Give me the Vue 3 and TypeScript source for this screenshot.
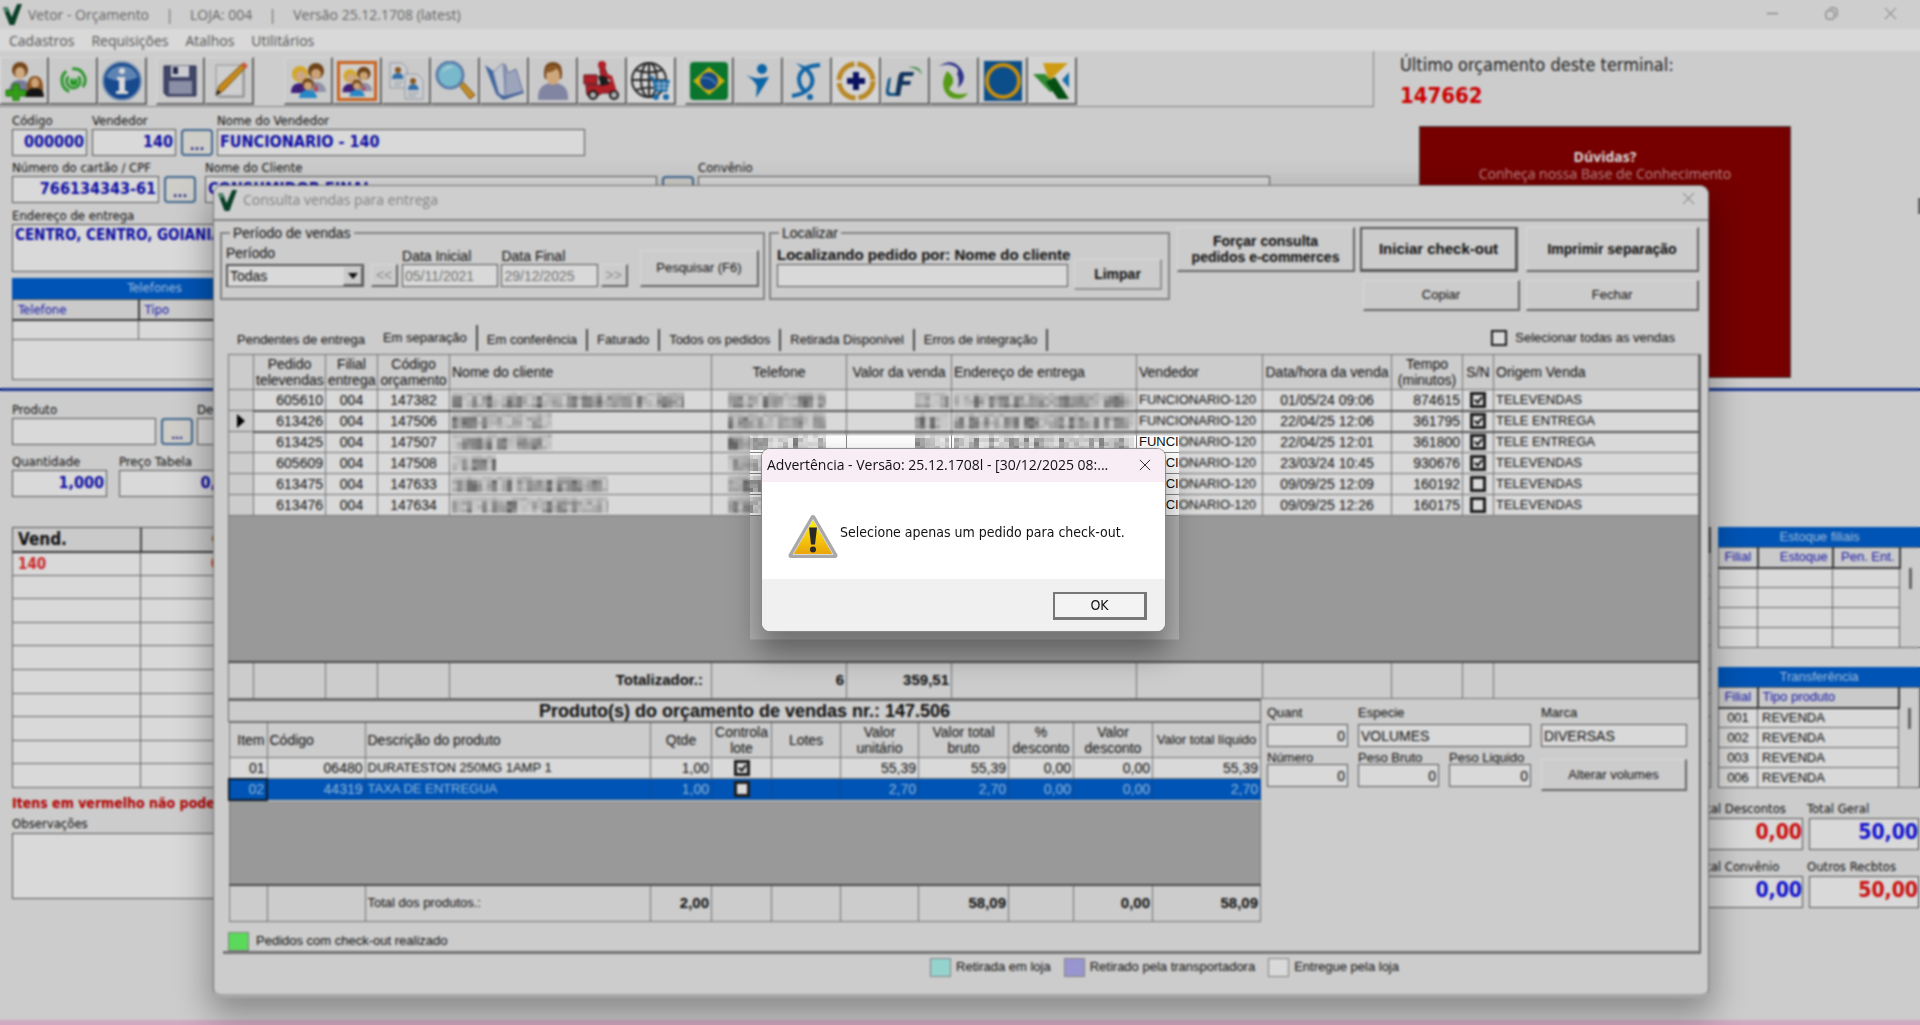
<script setup lang="ts">
import { ref } from 'vue'

type Sale = { order: string; branch: string; quote: string; name: number; date: string; minutes: string; checked: boolean; origin: string }
type Product = { item: string; code: string; description: string; lot: boolean; unit: string; selected: boolean }
type Block = { x: number; y: number; shade: string }

const menus = ['Cadastros', 'Requisições', 'Atalhos', 'Utilitários']

const people = `
  <circle cx="12" cy="13" r="8" fill="#f7c52f"/><circle cx="13" cy="15" r="5" fill="#f0c39a"/>
  <path d="M3 32q0-10 9-10t9 10z" fill="#4b2590"/>
  <circle cx="28" cy="10" r="8" fill="#82501f"/><circle cx="28" cy="13" r="5" fill="#f0c08c"/>
  <path d="M19 31q0-10 9-10t10 10z" fill="#a9abc6"/><path d="M28 22l2 7-2 2-2-2z" fill="#d8455c"/>
  <circle cx="20" cy="23" r="6" fill="#8a5522"/><circle cx="20" cy="25" r="4" fill="#f0c08c"/>
  <path d="M11 37q1-8 9-8t9 8z" fill="#2f9fe8"/>`

const icons: Record<string, string> = {
  addPeople: `<circle cx="16" cy="9" r="8" fill="#8a5420"/><ellipse cx="16" cy="12" rx="5" ry="6" fill="#f2c799"/>
    <path d="M5 32q0-13 11-13t10 13z" fill="#8c90b4"/><path d="M23 31q-1-16 8-16t8 16z" fill="#a5652a"/>
    <ellipse cx="31" cy="22" rx="4" ry="5" fill="#f0c08c"/><path d="M21 36q1-9 10-9t9 9z" fill="#191919"/>
    <path d="M9 23h6v6h7v6h-7v6H9v-6H2v-6h7z" fill="#3dba1c" stroke="#207c0b"/>`,
  power: `<g fill="none" stroke="#35b135" stroke-width="4"><path d="M11 7a16 16 0 0 0 4 27"/><path d="M19 4a15 15 0 0 1 14 24"/><path d="M14 14a9 9 0 1 0 13 0"/></g>
    <circle cx="21" cy="21" r="5" fill="#22b022"/><path d="M21 12v8" stroke="#d7f5d7" stroke-width="2"/>`,
  info: `<circle cx="20" cy="20" r="19" fill="#1c57a8" stroke="#95afd0" stroke-width="2"/><path d="M4 16a17 17 0 0 1 32 0q-16 8-32 0z" fill="#6f9bd2"/>
    <circle cx="20" cy="10" r="3" fill="#fff"/><path d="M15 16h8v14h3v3H14v-3h3V19h-2z" fill="#fff"/>`,
  save: `<path d="M4 5h32v30H7l-3-3z" fill="#4d547c" stroke="#2e3358"/><path d="M11 5h18v11H11z" fill="#eef0f7"/><path d="M13 6h5v7h-5z" fill="#2e3358"/>
    <path d="M9 20h23v13H9z" fill="#a3a8c4"/>`,
  edit: `<path d="M7 4h27v31H7z" fill="#f2f2f2" stroke="#aaa"/><path d="M9 36h26V8" fill="none" stroke="#8c8c8c"/>
    <path d="M7 34l3-9L33 3l4 3-23 24z" fill="#eaa320" stroke="#87580f"/><path d="M32 4l3-3 4 4-3 3z" fill="#e8674a"/><path d="M7 34l2-5 3 3z" fill="#222"/>`,
  people,
  peopleFrame: `<path d="M1 1h38v38H1z" fill="#f6f2ee" stroke="#ee7423" stroke-width="4"/><g transform="translate(3 4) scale(.85)">${people}</g>`,
  docs: `<path d="M4 2h12l5 5v20H4z" fill="#f0f2f6" stroke="#a9b0bc"/><circle cx="12" cy="9" r="3" fill="#a06526"/><path d="M6 18q0-6 6-6t5 6z" fill="#3d82c4"/>
    <path d="M8 21h9M8 24h7" stroke="#a5acb8"/><path d="M19 13h12l6 6v19H19z" fill="#f0f2f6" stroke="#a9b0bc"/><circle cx="27" cy="20" r="3" fill="#a06526"/>
    <path d="M22 29q0-6 5-6t6 6z" fill="#3d82c4"/><path d="M22 32h11M22 35h8" stroke="#a5acb8"/>`,
  search: `<path d="M24 24l4-3 12 13-5 4z" fill="#e6a52f" stroke="#8b5e13"/><circle cx="15" cy="14" r="13" fill="#8edaf0" stroke="#6c93c9" stroke-width="3"/><path d="M7 12a9 9 0 0 1 12-6q-9 1-12 6z" fill="#eafbff"/>`,
  book: `<path d="M1 4l8 6 10 26-7-3z" fill="#4a78ba"/><path d="M9 11L19 2l3 34-7-2z" fill="#e2e7f4" stroke="#8795bb"/><path d="M21 3l3 9 8-4 7 23-18 7z" fill="#b9c2de" stroke="#6f82b5"/><path d="M12 33l7 6 21-7-1-2-19 5-6-3z" fill="#5377b3"/>`,
  user: `<path d="M5 39q-1-17 15-17t15 17z" fill="#989dbf"/><path d="M11 12Q11 1 20 1t9 11q0 4-1 6H12q-1-2-1-6" fill="#885120"/><ellipse cx="20" cy="15" rx="7" ry="9" fill="#f3c491"/><path d="M13 11q7 1 11-4l3 5q1-8-7-8t-7 7z" fill="#a5692f"/>`,
  moto: `<g fill="#cf2630" stroke="#611016"><path d="M2 14h13v9H2z"/><path d="M18 7l4-2 3 8 3 3v2l-9-1z"/><path d="M4 24h15l3-3h7l5 8-6 3H20l-3 2H5z"/></g><circle cx="20" cy="4" r="4" fill="#cf2630"/>
    <path d="M16 15h8l3 8-8 2z" fill="#1f1f1f"/><g fill="#ccc" stroke="#191919" stroke-width="2"><circle cx="11" cy="34" r="4"/><circle cx="32" cy="34" r="4"/></g><path d="M24 14l5 2 4 14" fill="none" stroke="#cf2630" stroke-width="3"/>`,
  globe: `<g fill="none" stroke="#2b2b2b" stroke-width="2"><circle cx="18" cy="19" r="17"/><ellipse cx="18" cy="19" rx="8" ry="17"/><path d="M18 2v34M1 19h34M5 9q13 5 26 0M5 29q13-5 26 0"/></g>
    <path d="M17 15h5l2 4h15l-3 12H24l-3-13z" fill="#1c7cc4"/><path d="M24 23h14M25 27h12M28 20v10M33 20v10" stroke="#dcecf8"/><circle cx="25" cy="36" r="3" fill="#1c7cc4"/><circle cx="35" cy="36" r="3" fill="#1c7cc4"/>`,
  brazil: `<rect x="1" y="1" width="38" height="38" rx="4" fill="#0b8a35"/><path d="M20 6l16 14-16 14L4 20z" fill="#f3cf13"/><circle cx="20" cy="20" r="9" fill="#1954a0"/><path d="M12 17q9-2 15 6" fill="none" stroke="#5494d4" stroke-width="2"/>`,
  runner: `<circle cx="24" cy="8" r="5" fill="#0f77c4"/><path d="M8 14q10 4 14 3l9-1-4 7-9 14 1-12Q15 18 8 14z" fill="#0f77c4"/>`,
  loop: `<g fill="none" stroke="#1577c4" stroke-width="4"><path d="M33 4Q14 5 12 17q0 9 6 13"/><path d="M17 6q12 10 7 19-5 8-19 10"/></g><path d="M9 2l13 5-4 3z" fill="#1577c4"/><circle cx="23" cy="36" r="3" fill="#1577c4"/>`,
  cross: `<circle cx="20" cy="20" r="17" fill="none" stroke="#dba12f" stroke-width="5" stroke-dasharray="24 3"/><path d="M17 11h6v6h6v6h-6v6h-6v-6h-6v-6h6z" fill="#0d1672"/>`,
  letters: `<path d="M3 18l3-2-2 14q0 2 4 2h7l-2 3H5q-5 0-4-6z" fill="#16649c"/><path d="M17 11h12l-1 4h-9l-1 5h8l-1 4h-8l-2 11h-5l3-18q1-6 4-6z" fill="#173e6e"/><path d="M23 6q13-2 14 8l-3-4q-4-3-11-4z" fill="#44a34d"/>`,
  swirl: `<path d="M5 5Q19-4 27 8q7 10-3 19 2-10-1-14 2-4 0-6Q16 1 5 5z" fill="#373ba3"/><path d="M13 10q7 5 6 12l-4 6q6 8 19 4-5 8-16 5Q9 33 9 21q1-6 4-11z" fill="#66b51b"/>`,
  ring: `<path d="M1 0h38v40H1z" fill="#0e5ca2"/><circle cx="20" cy="20" r="16" fill="none" stroke="#e8a613" stroke-width="4"/>`,
  kite: `<path d="M11 2h25L17 20z" fill="#f3b718"/><path d="M1 13h12l14 15-9 3z" fill="#39a23b"/><path d="M14 21l9-5 14 22H26z" fill="#075d18"/><path d="M30 19l7-8v16z" fill="#1d83c9"/>`,
}

const toolGroups = [
  ['addPeople', 'power', 'info'],
  ['save', 'edit'],
  ['people', 'peopleFrame', 'docs', 'search', 'book', 'user', 'moto', 'globe'],
  ['brazil', 'runner', 'loop', 'cross', 'letters', 'swirl', 'ring', 'kite'],
]

const tabs = ['Pendentes de entrega', 'Em separação', 'Em conferência', 'Faturado', 'Todos os pedidos', 'Retirada Disponível', 'Erros de integração']

const sales = ref<Sale[]>([
  { order: '605610', branch: '004', quote: '147382', name: 232, date: '01/05/24 09:06', minutes: '874615', checked: true, origin: 'TELEVENDAS' },
  { order: '613426', branch: '004', quote: '147506', name: 100, date: '22/04/25 12:06', minutes: '361795', checked: true, origin: 'TELE ENTREGA' },
  { order: '613425', branch: '004', quote: '147507', name: 100, date: '22/04/25 12:01', minutes: '361800', checked: true, origin: 'TELE ENTREGA' },
  { order: '605609', branch: '004', quote: '147508', name: 44, date: '23/03/24 10:45', minutes: '930676', checked: true, origin: 'TELEVENDAS' },
  { order: '613475', branch: '004', quote: '147633', name: 156, date: '09/09/25 12:09', minutes: '160192', checked: false, origin: 'TELEVENDAS' },
  { order: '613476', branch: '004', quote: '147634', name: 156, date: '09/09/25 12:26', minutes: '160175', checked: false, origin: 'TELEVENDAS' },
])

const products = ref<Product[]>([
  { item: '01', code: '06480', description: 'DURATESTON 250MG 1AMP 1', lot: true, unit: '55,39', selected: false },
  { item: '02', code: '44319', description: 'TAXA DE ENTREGUA', lot: false, unit: '2,70', selected: true },
])

const selectAll = ref(false)
const transfers = ['001', '002', '003', '006']

// Masked personal data: a deterministic mosaic of small grey blocks.
function mosaic(width: number, seed: number): Block[] {
  const blocks: Block[] = []
  let state = seed * 7919 + 13
  const next = () => (state = (state * 48271) % 2147483647)
  for (let x = 0; x < width; x += 5) {
    const stroke = 115 + (next() % 105)
    for (let y = 0; y < 16; y += 4) {
      const level = y === 0 ? 205 + (next() % 30) : Math.min(235, stroke + (next() % 45))
      blocks.push({ x, y, shade: `rgb(${level},${level},${level})` })
    }
  }
  return blocks
}
</script>

<template>
  <main class="desktop">
    <header class="titlebar">
      <svg class="mark" viewBox="0 0 20 22" aria-hidden="true"><path d="M0 4l5-1 4 11L15 0h5l-8 22H7z" fill="#0b4a2e" /><path d="M0 4l5-1 1 4-4 2z" fill="#5c9c7c" /></svg>
      <span>Vetor - Orçamento</span><span class="bar">|</span><span>LOJA: 004</span><span class="bar">|</span><span>Versão 25.12.1708 (latest)</span>
      <div class="caption-buttons">
        <button type="button" aria-label="Minimizar"><svg viewBox="0 0 14 14"><path d="M1 7h12" /></svg></button>
        <button type="button" aria-label="Restaurar"><svg viewBox="0 0 14 14"><rect x="1" y="4" width="9" height="9" rx="2" /><path d="M4 2q1-1 2-1h4q3 0 3 3v5q0 1-1 2" /></svg></button>
        <button type="button" aria-label="Fechar aplicativo"><svg viewBox="0 0 14 14"><path d="M1 1l12 12M13 1L1 13" /></svg></button>
      </div>
    </header>
    <nav class="menubar"><a v-for="m in menus" :key="m" href="#">{{ m }}</a></nav>

    <section class="upper">
      <div class="upper-main">
        <div class="toolbar">
          <div v-for="(group, g) in toolGroups" :key="g" class="tool-group">
            <button v-for="name in group" :key="name" type="button" class="tool" :class="'tool-' + name" :aria-label="name">
              <svg viewBox="0 0 40 40" v-html="icons[name]"></svg>
            </button>
          </div>
        </div>
        <div class="form">
          <div class="row first-row">
            <label class="field w75 right">Código<input value="000000" /></label>
            <label class="field w84 right">Vendedor<input value="140" /></label>
            <button type="button" class="dots">...</button>
            <label class="field w368">Nome do Vendedor<input value="FUNCIONARIO - 140" /></label>
          </div>
          <div class="row">
            <label class="field w147 right">Número do cartão / CPF<input value="766134343-61" /></label>
            <button type="button" class="dots">...</button>
            <label class="field w452 client">Nome do Cliente<input value="CONSUMIDOR FINAL" /></label>
            <button type="button" class="dots">...</button>
            <label class="field w572">Convênio<input value="" /></label>
          </div>
          <label class="field address">Endereço de entrega<textarea rows="2">CENTRO, CENTRO, GOIANIA</textarea></label>
          <table class="phones">
            <caption>Telefones</caption>
            <thead><tr><th>Telefone</th><th>Tipo</th></tr></thead>
            <tbody><tr><td></td><td></td></tr><tr class="blank"><td colspan="2"></td></tr></tbody>
          </table>
        </div>
      </div>
      <aside class="side">
        <p class="last">Último orçamento deste terminal:</p>
        <p class="last-number">147662</p>
        <div class="help"><strong>Dúvidas?</strong><span>Conheça nossa Base de Conhecimento</span></div>
        <i class="thumb side-thumb"></i>
      </aside>
    </section>

    <section class="lower">
      <div class="lower-main">
        <div class="row product-row">
          <label class="field w144">Produto<input value="" /></label>
          <button type="button" class="dots">...</button>
          <label class="field w452">Descrição<input value="" /></label>
        </div>
        <div class="row amount-row">
          <label class="field w95 right">Quantidade<input value="1,000" /></label>
          <label class="field w130 right">Preço Tabela<input value="0,000" /></label>
        </div>
        <table class="items">
          <thead><tr><th class="seller">Vend.</th><th class="code">Código</th></tr></thead>
          <tbody>
            <tr><td>140</td><td class="code">06480</td></tr>
            <tr v-for="n in 9" :key="n"><td>&nbsp;</td><td>&nbsp;</td></tr>
          </tbody>
        </table>
      </div>
      <aside class="stock">
        <table class="mini">
          <caption>Estoque filiais</caption>
          <thead><tr><th class="c1">Filial</th><th class="c2 end">Estoque</th><th class="c3 end">Pen. Ent.</th><td class="scroll"></td></tr></thead>
          <tbody><tr v-for="n in 4" :key="n"><td></td><td></td><td></td><td v-if="n === 1" rowspan="4" class="scroll"><i class="thumb"></i></td></tr></tbody>
        </table>
        <table class="mini">
          <caption>Transferência</caption>
          <thead><tr><th class="c1">Filial</th><th>Tipo produto</th><td class="scroll"></td></tr></thead>
          <tbody><tr v-for="(t, i) in transfers" :key="t"><td class="mid">{{ t }}</td><td>REVENDA</td><td v-if="i === 0" rowspan="4" class="scroll"><i class="thumb"></i></td></tr></tbody>
        </table>
      </aside>
    </section>

    <section class="bottom">
      <div class="notes">
        <p class="warn">Itens em vermelho não podem ser vendidos</p>
        <label class="field">Observações<textarea rows="3"></textarea></label>
      </div>
      <div class="totals">
        <label class="field right red left-col"><span>Total Descontos</span><input value="0,00" /></label>
        <label class="field right"><span>Total Geral</span><input value="50,00" /></label>
        <label class="field right left-col"><span>Total Convênio</span><input value="0,00" /></label>
        <label class="field right red"><span>Outros Recbtos</span><input value="50,00" /></label>
      </div>
    </section>
    <footer class="strip"></footer>

    <section class="window" aria-label="Consulta vendas para entrega">
      <header class="window-title">
        <svg class="mark" viewBox="0 0 20 22" aria-hidden="true"><path d="M0 4l5-1 4 11L15 0h5l-8 22H7z" fill="#0b4a2e" /><path d="M0 4l5-1 1 4-4 2z" fill="#5c9c7c" /></svg>
        <span>Consulta vendas para entrega</span>
        <button type="button" class="close" aria-label="Fechar janela"><svg viewBox="0 0 14 14"><path d="M1 1l12 12M13 1L1 13" /></svg></button>
      </header>

      <div class="filters">
        <fieldset class="period">
          <legend>Período de vendas</legend>
          <div class="line">
            <label class="stack w139">Período<span class="select"><select><option>Todas</option></select></span></label>
            <button type="button" class="btn arrow" disabled>&lt;&lt;</button>
            <label class="stack w97">Data Inicial<input value="05/11/2021" disabled /></label>
            <label class="stack w97">Data Final<input value="29/12/2025" disabled /></label>
            <button type="button" class="btn arrow" disabled>&gt;&gt;</button>
            <button type="button" class="btn run-search">Pesquisar (F6)</button>
          </div>
        </fieldset>
        <fieldset class="locate">
          <legend>Localizar</legend>
          <div class="line">
            <label class="stack bold w290">Localizando pedido por: Nome do cliente<input value="" /></label>
            <button type="button" class="btn bold clear">Limpar</button>
          </div>
        </fieldset>
        <div class="actions">
          <button type="button" class="btn bold">Forçar consulta<br />pedidos e-commerces</button>
          <button type="button" class="btn bold focus">Iniciar check-out</button>
          <button type="button" class="btn bold">Imprimir separação</button>
          <button type="button" class="btn small copy">Copiar</button>
          <button type="button" class="btn small">Fechar</button>
        </div>
      </div>

      <div class="tabs">
        <button v-for="(t, i) in tabs" :key="t" type="button" :class="{ active: i === 1, first: i === 0 }">{{ t }}</button>
        <label class="all"><input v-model="selectAll" type="checkbox" />Selecionar todas as vendas</label>
      </div>

      <div class="page">
        <table class="sales">
          <colgroup>
            <col class="k25" /><col class="k72" /><col class="k52" /><col class="k72" /><col class="k262" /><col class="k135" /><col class="k105" /><col />
            <col class="k126" /><col class="k129" /><col class="k71" /><col class="k31" /><col class="k205" />
          </colgroup>
          <thead>
            <tr>
              <th></th><th>Pedido<br />televendas</th><th>Filial<br />entrega</th><th>Código<br />orçamento</th><th class="start">Nome do cliente</th>
              <th>Telefone</th><th>Valor da venda</th><th class="start">Endereço de entrega</th><th class="start">Vendedor</th><th>Data/hora da venda</th>
              <th>Tempo<br />(minutos)</th><th>S/N</th><th class="start">Origem Venda</th>
            </tr>
          </thead>
          <tbody>
            <tr v-for="(s, i) in sales" :key="s.order" :class="{ current: i === 1 }">
              <th class="pointer"><svg v-if="i === 1" viewBox="0 0 8 14"><path d="M0 0l8 7-8 7z" /></svg></th>
              <td class="end">{{ s.order }}</td><td class="mid">{{ s.branch }}</td><td class="mid">{{ s.quote }}</td>
              <td><svg class="mask" :width="s.name" height="16"><rect v-for="(b, k) in mosaic(s.name, i + 1)" :key="k" :x="b.x" :y="b.y" width="5" height="4" :fill="b.shade" /></svg></td>
              <td class="phone"><svg class="mask" width="98" height="16"><rect v-for="(b, k) in mosaic(98, i + 11)" :key="k" :x="b.x" :y="b.y" width="5" height="4" :fill="b.shade" /></svg></td>
              <td class="value"><svg class="mask" width="34" height="16"><rect v-for="(b, k) in mosaic(34, i + 21)" :key="k" :x="b.x" :y="b.y" width="5" height="4" :fill="b.shade" /></svg></td>
              <td><svg class="mask" width="180" height="16"><rect v-for="(b, k) in mosaic(180, i + 31)" :key="k" :x="b.x" :y="b.y" width="5" height="4" :fill="b.shade" /></svg></td>
              <td>FUNCIONARIO-120</td><td class="mid">{{ s.date }}</td><td class="end">{{ s.minutes }}</td>
              <td class="mid"><input v-model="s.checked" type="checkbox" :aria-label="'Selecionar ' + s.order" /></td><td>{{ s.origin }}</td>
            </tr>
            <tr class="filler"><td colspan="13"></td></tr>
          </tbody>
          <tfoot>
            <tr>
              <td></td><td></td><td></td><td></td><td class="end total-label">Totalizador.:</td><td class="end">6</td><td class="end">359,51</td>
              <td></td><td></td><td></td><td></td><td></td><td></td>
            </tr>
          </tfoot>
        </table>

        <div class="detail">
          <div class="detail-main">
            <table class="products">
              <caption>Produto(s) do orçamento de vendas nr.: 147.506</caption>
              <colgroup>
                <col class="k38" /><col class="k98" /><col /><col class="k61" /><col class="k60" /><col class="k69" /><col class="k78" /><col class="k90" /><col class="k65" /><col class="k79" /><col class="k108" />
              </colgroup>
              <thead>
                <tr>
                  <th class="end">Item</th><th class="start">Código</th><th class="start">Descrição do produto</th><th>Qtde</th><th>Controla<br />lote</th><th>Lotes</th>
                  <th>Valor<br />unitário</th><th>Valor total<br />bruto</th><th>%<br />desconto</th><th>Valor<br />desconto</th><th class="tight">Valor total líquido</th>
                </tr>
              </thead>
              <tbody>
                <tr v-for="p in products" :key="p.item" :class="{ selected: p.selected }">
                  <td class="end">{{ p.item }}</td><td class="end">{{ p.code }}</td><td>{{ p.description }}</td><td class="end">1,00</td>
                  <td class="mid"><input v-model="p.lot" type="checkbox" :aria-label="'Controla lote ' + p.item" /></td><td></td>
                  <td class="end">{{ p.unit }}</td><td class="end">{{ p.unit }}</td><td class="end">0,00</td><td class="end">0,00</td><td class="end">{{ p.unit }}</td>
                </tr>
                <tr class="filler"><td colspan="11"></td></tr>
              </tbody>
              <tfoot>
                <tr>
                  <td></td><td></td><td class="plain">Total dos produtos.:</td><td class="end">2,00</td><td></td><td></td><td></td><td class="end">58,09</td><td></td>
                  <td class="end">0,00</td><td class="end">58,09</td>
                </tr>
              </tfoot>
            </table>
            <p class="legend"><i class="swatch green"></i>Pedidos com check-out realizado</p>
          </div>
          <div class="volumes">
            <label class="stack right">Quant<input value="0" /></label>
            <label class="stack wide">Especie<input value="VOLUMES" /></label>
            <label class="stack">Marca<input value="DIVERSAS" /></label>
            <label class="stack right low">Número<input value="0" /></label>
            <label class="stack right low">Peso Bruto<input value="0" /></label>
            <label class="stack right low">Peso Liquido<input value="0" /></label>
            <button type="button" class="btn small change">Alterar volumes</button>
          </div>
        </div>
      </div>

      <div class="legends">
        <p class="legend"><i class="swatch cyan"></i>Retirada em loja</p>
        <p class="legend"><i class="swatch violet"></i>Retirado pela transportadora</p>
        <p class="legend"><i class="swatch white"></i>Entregue pela loja</p>
      </div>
    </section>

    <div class="veil"></div>
    <div class="alert" role="alertdialog" aria-labelledby="alert-title">
      <header><h2 id="alert-title">Advertência - Versão: 25.12.1708l - [30/12/2025 08:...</h2>
        <button type="button" class="close" aria-label="Fechar aviso"><svg viewBox="0 0 14 14"><path d="M1 1l12 12M13 1L1 13" /></svg></button></header>
      <div class="message">
        <svg viewBox="0 0 50 44" aria-hidden="true">
          <defs><linearGradient id="gold" x1="0" y1="0" x2="0" y2="1"><stop offset="0" stop-color="#fff200" /><stop offset=".45" stop-color="#f6cf10" /><stop offset="1" stop-color="#eba408" /></linearGradient></defs>
          <path d="M25 3L47 41H3z" fill="#a9a9a9" stroke="#a9a9a9" stroke-width="5" stroke-linejoin="round" /><path d="M25 5L45 40H5z" fill="url(#gold)" stroke="#d9d9d9" stroke-linejoin="round" />
          <path d="M21 13h8l-2 17h-4z" fill="#292929" /><circle cx="25" cy="35" r="3" fill="#292929" />
        </svg>
        <p>Selecione apenas um pedido para check-out.</p>
      </div>
      <footer><button type="button" class="ok">OK</button></footer>
    </div>
  </main>
</template>

<style>
body { margin: 0; }
</style>

<style scoped>
.desktop {
  --sans: "Liberation Sans", Arial, sans-serif;
  --form: "DejaVu Sans Condensed", "DejaVu Sans", sans-serif;
  --ui: "Open Sans", "Noto Sans", sans-serif;
  position: relative; display: flex; flex-direction: column; min-height: 100vh; overflow: hidden;
  background: #f0f0f0; color: #111; font: 14px/16px var(--sans);
}
.desktop *, .desktop *::before, .desktop *::after { box-sizing: border-box; }
p, h2 { margin: 0; }
button, input, select, textarea { font: inherit; color: inherit; margin: 0; border-radius: 0; }
.titlebar { display: flex; align-items: center; height: 29px; padding-left: 3px; background: #f3f3f3; color: #777; font: 14px/28px var(--ui); }
.mark { width: 19px; height: 21px; margin-right: 6px; }
.titlebar .bar { width: 41px; text-align: center; }
.caption-buttons { display: flex; margin-left: auto; }
.caption-buttons button, .close { width: 59px; height: 28px; padding: 0; border: 0; background: none; }
.caption-buttons svg, .close svg { width: 13px; height: 13px; fill: none; stroke: #777; stroke-width: 1; overflow: visible; }
.menubar { display: flex; gap: 17px; height: 22px; padding-left: 9px; background: #fff; font: 14px/24px var(--ui); }
.menubar a { color: #666; text-decoration: none; }

.upper { display: flex; height: 340px; border-bottom: 3px solid #1f3fa8; }
.upper-main { flex: 1; min-width: 0; }
.toolbar { display: flex; height: 56px; padding-top: 6px; border-right: 1px solid #999; border-bottom: 1px solid #999; background: #f1f1f1; }
.tool-group { display: flex; margin-right: 9px; }
.tool-group:nth-child(2) { margin-right: 30px; }
.tool { display: flex; align-items: center; justify-content: center; width: 49px; height: 48px; padding: 0; border: solid; border-width: 1px 2px 2px 1px; border-color: #fff #777 #777 #fff; background: #eee; }
.tool svg { width: 40px; height: 40px; }
.tool-power svg { width: 30px; height: 32px; }
.tool-globe, .tool-cross, .tool-kite { background: #fafafa; }

.form { padding: 5px 0 0 12px; font-family: var(--form); }
.row { display: flex; align-items: flex-end; height: 47px; }
.first-row { height: 44px; }
.field { display: flex; flex-direction: column; font: 13px/17px var(--form); color: #111; }
.field input, .field textarea { width: 100%; height: 27px; padding: 0 2px 2px; border: 1px solid #666; background: #fff; color: #1010c0; font: bold 16px/20px var(--form); outline: 0; resize: none; }
.right input { text-align: right; }
.w75 { width: 75px; margin-right: 5px; } .w84 { width: 84px; } .w368 { width: 368px; } .w147 { width: 147px; }
.w452 { width: 452px; } .w572 { width: 572px; } .w144 { width: 144px; } .w95 { width: 95px; } .w130 { width: 130px; }
.dots { width: 32px; height: 27px; margin: 0 4px 0 5px; padding: 4px 0 0; border: 2px solid #4a78a8; border-radius: 4px; background: #f2f1ec; color: #2a2a9c; font-weight: bold; }
.client { margin-left: 5px; }
.address { width: 640px; margin-top: 4px; }
.field.address textarea { height: 48px; font-size: 15px; }
.phones { width: 285px; height: 81px; margin-top: 6px; border: 1px solid #666; border-collapse: collapse; table-layout: fixed; background: #fff; }
caption { height: 21px; background: #0063d5; color: #bcdcff; font-size: 13px; line-height: 20px; }
.phones th { height: 20px; padding: 0 5px; border: solid #444; border-width: 0 2px 2px 0; background: #eee; color: #2222c8; font-weight: normal; font-size: 13px; line-height: 17px; text-align: left; }
.phones th:first-child { width: 126px; }
.phones td { height: 20px; border: 1px solid #777; padding: 0; }
.phones .blank td { height: 40px; }

.side { position: relative; width: 546px; padding: 3px 0 0 26px; }
.last { color: #222; font: 18px/21px var(--form); }
.last-number { margin-top: 11px; color: #f00000; font: bold 22px/20px var(--form); }
.help { display: flex; flex-direction: column; align-items: center; width: 372px; height: 252px; margin: 20px 0 0 19px; padding-top: 21px; border: 1px solid #555; background: #8b0000; color: #fff; font: 14px/17px var(--ui); }
.help span { color: #dba0a0; }
.thumb { display: block; width: 3px; height: 21px; margin: 0 auto; background: #777; }
.side-thumb { position: absolute; top: 147px; right: 0; width: 2px; height: 16px; }

.lower { display: flex; gap: 7px; height: 397px; }
.lower-main { flex: 1; min-width: 0; padding: 7px 0 0 12px; }
.amount-row { height: 52px; gap: 12px; }
.items { width: 100%; height: 261px; margin-top: 30px; border-collapse: collapse; table-layout: fixed; border: 1px solid #666; background: #fff; font: 15px/18px var(--form); }
.items th { height: 24px; padding: 0 5px; border-bottom: 2px solid #444; border-right: 2px solid #555; background: #eee; font-weight: bold; font-size: 17px; text-align: left; }
.items .seller { width: 128px; }
.items td { height: 23px; padding: 0 5px; border: 1px solid #777; color: #f03030; font-weight: bold; }
.items .code { padding-left: 70px; }
.stock { width: 202px; padding-top: 136px; }
.mini { width: 202px; margin-bottom: 19px; border-collapse: collapse; table-layout: fixed; border: 1px solid #777; background: #fff; font-size: 13px; }
.mini caption { height: 20px; }
.mini th { height: 20px; padding: 0 4px; border: solid #444; border-width: 0 2px 2px 0; background: #eee; color: #2222c8; font-weight: normal; text-align: left; }
.mini td { height: 20px; padding: 0 4px; border: 1px solid #777; }
.mini .c1 { width: 39px; padding: 0; text-align: center; } .mini .c2 { width: 75px; } .mini .c3 { width: 67px; }
.mini .scroll { width: 21px; padding: 0; border-width: 0 0 0 1px; background: #f0f0f0; vertical-align: top; }
.mid { text-align: center; } .mini .end, .end { text-align: right; }

.bottom { display: flex; justify-content: space-between; height: 232px; }
.notes { width: 1400px; padding: 6px 0 0 12px; }
.warn { color: #d00000; font: bold 14px/18px var(--form); }
.notes .field { margin-top: 3px; line-height: 18px; }
.notes textarea { height: 66px; }
.totals { display: grid; grid-template-columns: 117px 110px; grid-template-rows: 50px 50px; gap: 8px 6px; align-content: start; width: 234px; padding-top: 12px; }
.totals .field { line-height: 18px; }
.totals span { margin-left: -2px; }
.totals .left-col span { margin-left: 8px; }
.totals input { height: 32px; padding: 0 0 4px; font: bold 21px/26px var(--form); color: #1616f0; }
.totals .red input { color: #ee1111; }
.strip { height: 5px; margin-top: auto; background: #f6c8e4; }

.window { position: absolute; top: 185px; left: 213px; right: 211px; padding-bottom: 17px; border: 1px solid #888; border-bottom: 4px solid #c4c4c4; border-radius: 9px; background: #f0f0f0; box-shadow: 0 14px 34px 4px rgba(0, 0, 0, .32); }
.window-title { display: flex; align-items: center; height: 35px; padding: 0 0 5px 4px; border-bottom: 2px solid #999; border-radius: 9px 9px 0 0; background: #f3f3f3; color: #999; font: 14px/28px var(--ui); }
.close { width: 40px; margin-left: auto; }
.filters { display: flex; padding: 4px 9px 0 6px; }
fieldset { min-width: 0; height: 75px; margin: 0 4px 0 0; padding: 0 4px; border: 2px solid #999; }
legend { margin-left: 4px; padding: 0 3px; }
.period { width: 545px; } .locate { width: 401px; margin-right: 7px; }
.line { display: flex; align-items: flex-end; height: 49px; }
.line .stack, .arrow, .run-search { margin-bottom: 3px; }
.stack { display: flex; flex-direction: column; line-height: 16px; }
.stack input, select { width: 100%; height: 23px; padding: 0 2px; border: 1px solid #666; background: #fff; line-height: 18px; outline: 0; }
.select { position: relative; display: block; margin-top: 3px; }
select { display: block; appearance: none; border-width: 2px 1px 1px 2px; }
.select::before { content: ""; position: absolute; top: 2px; right: 1px; width: 20px; height: 20px; border: solid; border-width: 1px 2px 2px 1px; border-color: #fff #777 #777 #fff; background: #eee; pointer-events: none; }
.select::after { content: ""; position: absolute; top: 9px; right: 6px; border: solid transparent; border-width: 6px 5px 0; border-top-color: #111; pointer-events: none; }
.stack input:disabled { color: #888; background: #fff; }
.w139 { width: 139px; margin-right: 7px; } .w97 { width: 97px; margin-right: 3px; } .w290 { width: 291px; margin-left: 2px; }
.bold { font-weight: bold; }
.stack.bold { font-size: 15px; white-space: nowrap; line-height: 18px; }
.btn { padding: 0; border: solid; border-width: 1px 2px 2px 1px; border-color: #fff #777 #777 #fff; background: #f0f0f0; line-height: 16px; }
.small { font-size: 13px; }
.arrow { width: 27px; height: 23px; color: #aaa; margin-right: 4px; }
.run-search { width: 120px; height: 37px; margin-left: 8px; font-size: 13px; }
.clear { width: 88px; height: 31px; margin-left: 6px; border-color: #fff #aaa #aaa #fff; }
.actions { display: grid; grid-template-columns: 178px 161px 1fr; grid-template-rows: 45px 31px; gap: 8px 5px; flex: 1; padding-top: 2px; }
.actions .copy { grid-column: 2; margin: 0 1px 0 3px; }
.actions .focus { margin-right: 3px; border: 2px solid #666; border-right-width: 3px; border-bottom-width: 3px; font-size: 15px; }

.tabs { display: flex; align-items: center; height: 32px; margin-top: 11px; padding: 0 33px 0 14px; font-size: 13px; }
.tabs button { height: 22px; margin-top: 3px; padding: 0 9px; border: 0; border-right: 2px solid #555; background: none; }
.tabs .first { border-right: 0; }
.tabs .active { height: 26px; margin-top: 0; }
.all { display: flex; align-items: center; gap: 8px; margin-left: auto; }
input[type="checkbox"] { display: inline-block; appearance: none; position: relative; width: 16px; height: 16px; border: 2px solid #222; background: #fff; vertical-align: middle; }
input[type="checkbox"]:checked::after { content: ""; position: absolute; left: 3px; top: 0; width: 5px; height: 8px; border: solid #111; border-width: 0 2px 2px 0; transform: rotate(40deg); }

.page { margin: 0 7px 0 9px; border-right: 2px solid #777; border-bottom: 3px solid #888; }
.sales, .products { width: 100%; border-collapse: collapse; table-layout: fixed; background: #fff; }
.sales { height: 345px; margin-left: 5px; width: calc(100% - 5px); border: 1px solid #777; }
.page th, .page td { height: 21px; padding: 0 2px; border: 1px solid #888; font-weight: normal; white-space: nowrap; overflow: hidden; }
.page th { background: #f0f0f0; text-align: center; }
.page thead th { height: 35px; }
.page thead .tight { padding: 0; font-size: 13px; }
.page th.start { text-align: left; } .page th.end { text-align: right; }
.page tbody td { font-size: 13px; }
.page tbody .mid, .page tbody .end { font-size: 14px; }
.page td .mask { display: block; }
.page td input { display: block; margin: 0 auto; border-width: 3px; }
.page .phone { padding-left: 16px; } .page .value { padding-left: 68px; }
.page .pointer svg { display: block; width: 8px; height: 14px; margin: 0 auto; }
.page .current td { border-top: 2px solid #666; border-bottom: 2px solid #666; }
.page .filler td { height: auto; background: #b4b4b4; border-bottom: 2px solid #555; }
.page tfoot td { height: 37px; background: #f0f0f0; font-weight: bold; font-size: 15px; }
.page tfoot .plain { font-weight: normal; font-size: 13px; }
.page .total-label { padding-right: 8px; }
.page .selected td { background: #0063d5; color: #a8d4ff; border-color: #1658a8; }
.page .selected td:first-child { border: 2px solid #123; }
.k25 { width: 25px; } .k31 { width: 31px; } .k38 { width: 38px; } .k52 { width: 52px; } .k60 { width: 60px; } .k61 { width: 61px; } .k65 { width: 65px; } .k69 { width: 69px; }
.k71 { width: 71px; } .k72 { width: 72px; } .k78 { width: 78px; } .k79 { width: 79px; } .k90 { width: 90px; } .k98 { width: 98px; } .k105 { width: 105px; } .k108 { width: 108px; }
.k126 { width: 126px; } .k129 { width: 129px; } .k135 { width: 135px; } .k205 { width: 205px; } .k262 { width: 262px; }
.detail { display: flex; padding-left: 5px; }
.detail-main { flex: 1; min-width: 0; }
.products { height: 200px; border: 1px solid #777; }
.products caption { height: 23px; border: solid #777; border-width: 2px 1px 1px; background: #f0f0f0; color: #111; font: bold 18px/20px var(--sans); }
.legend { display: flex; align-items: center; height: 20px; gap: 7px; font-size: 13px; }
.detail-main .legend { margin-top: 9px; }
.swatch { width: 21px; height: 19px; border: 1px solid #999; }
.green { background: #6cff6c; } .cyan { background: #b0f8f4; } .violet { background: #b4b0f4; } .white { background: #fff; }
.volumes { display: grid; grid-template-columns: 81px 81px 82px 146px; grid-template-rows: 42px 40px; column-gap: 10px; align-content: start; width: 438px; padding: 6px 0 0 6px; font-size: 13px; }
.volumes .wide { grid-column: span 2; }
.volumes .stack { justify-content: space-between; }
.volumes .low { justify-content: flex-end; line-height: 12px; }
.volumes input { font-size: 14px; }
.change { height: 32px; margin-top: 12px; }
.legends { display: flex; justify-content: flex-end; gap: 13px; margin-top: 3px; padding-right: 309px; }
.legends .legend { gap: 5px; }

.veil { position: absolute; inset: 0; background: rgba(0, 0, 0, .15); backdrop-filter: blur(1px); pointer-events: none;
  --l: calc(50% - 210px); --r: calc(50% + 219px); --t: calc(50% - 77px); --b: calc(50% + 127px);
  clip-path: polygon(evenodd, 0 0, 100% 0, 100% 100%, 0 100%, 0 0, var(--l) var(--t), var(--r) var(--t), var(--r) var(--b), var(--l) var(--b), var(--l) var(--t)); }
.alert { position: absolute; left: calc(50% - 198px); top: calc(50% - 64px); width: 403px; border-radius: 8px; overflow: hidden; background: #fff; color: #111; box-shadow: 0 0 1px 1px #888, 0 18px 30px 4px rgba(0, 0, 0, .38); }
.alert header { display: flex; align-items: center; height: 33px; padding-left: 5px; background: #f9edf5; }
.alert h2 { white-space: nowrap; color: #111; font: 14px/32px var(--ui); }
.alert .close { height: 33px; }
.alert .close svg { display: block; margin: 0 auto; stroke: #111; width: 12px; height: 12px; }
.message { display: flex; height: 97px; padding: 32px 0 0 26px; gap: 2px; }
.message svg { width: 50px; height: 45px; }
.message p { padding-top: 9px; font: 14px/18px var(--form); white-space: nowrap; }
.alert footer { display: flex; justify-content: flex-end; height: 52px; padding: 13px 18px; background: #f0f0f0; }
.ok { width: 94px; height: 28px; padding: 0; border: 2px solid #777; border-right-width: 3px; border-bottom-width: 3px; background: #f3f3f3; font: 14px/18px var(--form); }
</style>
